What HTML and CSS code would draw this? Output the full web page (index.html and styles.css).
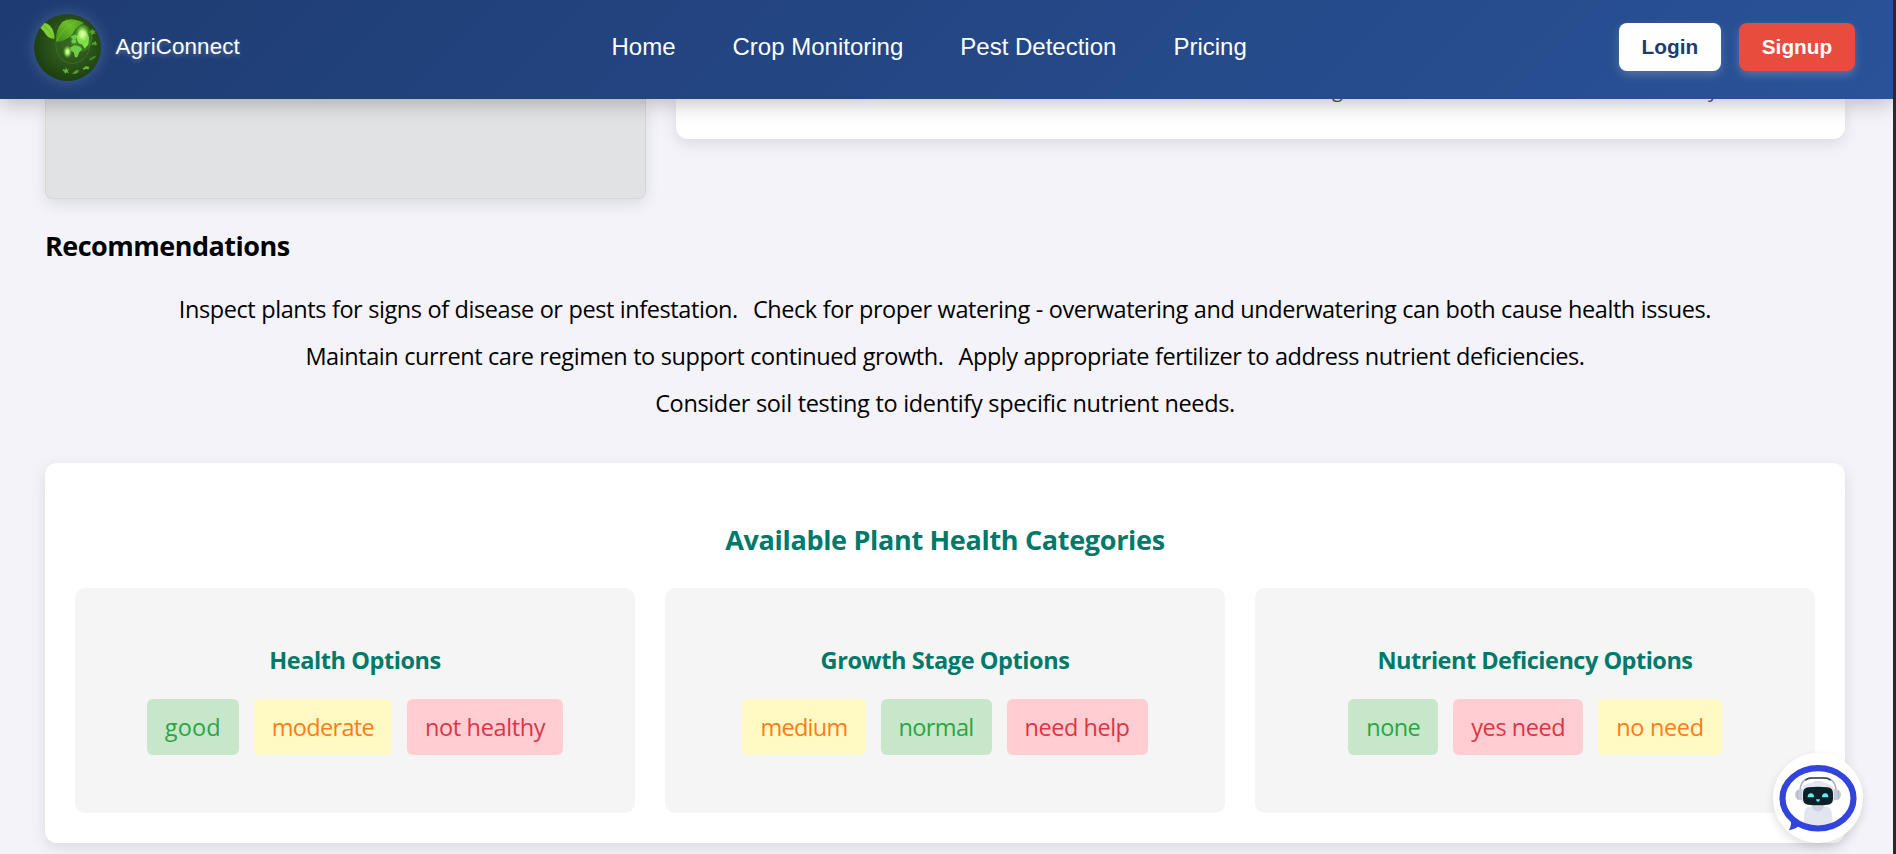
FILE: index.html
```html
<!DOCTYPE html>
<html lang="en">
<head>
<meta charset="utf-8">
<title>AgriConnect</title>
<link rel="stylesheet" href="styles.css">
</head>
<body>
<div class="page">
  <header class="navbar">
    <div class="brand">
      <svg class="brand-logo" viewBox="17 16 202 202">
        <defs>
          <radialGradient id="globe" cx="0.55" cy="0.45" r="0.6">
            <stop offset="0" stop-color="#3a6b20"/>
            <stop offset="0.55" stop-color="#2a5219"/>
            <stop offset="1" stop-color="#193c0d"/>
          </radialGradient>
          <linearGradient id="leaf" x1="0" y1="1" x2="1" y2="0">
            <stop offset="0" stop-color="#3c8a17"/>
            <stop offset="0.6" stop-color="#6cbd28"/>
            <stop offset="1" stop-color="#4c9a1c"/>
          </linearGradient>
          <radialGradient id="glow">
            <stop offset="0" stop-color="#f4ffd0"/>
            <stop offset="0.4" stop-color="#b4f970" stop-opacity="0.9"/>
            <stop offset="1" stop-color="#56c02a" stop-opacity="0"/>
          </radialGradient>
        </defs>
        <circle cx="118" cy="117" r="101" fill="url(#globe)"/>
        <path d="M38 46Q54 38 66 52Q78 66 79 90Q62 92 53 78Q46 66 36 58Z" fill="#7dcf35"/>
        <path d="M42 47Q62 62 76 88" fill="none" stroke="#5fae27" stroke-width="2"/>
        <path d="M83 101Q82 62 102 40Q126 22 168 43Q150 50 141 62Q128 96 83 101Z" fill="url(#leaf)"/>
        <path d="M86 97Q100 60 146 38" fill="none" stroke="#7cc93a" stroke-width="2"/>
        <path d="M83 100Q80 140 108 158Q136 174 164 154Q188 134 184 96Q178 62 152 54" fill="none" stroke="#4a7a38" stroke-width="2"/>
        <ellipse cx="160" cy="88" rx="34" ry="42" fill="#57b52f" opacity="0.3"/>
        <path d="M127 84L142 78L150 84L142 92L146 102L136 106L129 100L134 92Z" fill="#6fcb48"/>
        <path d="M127 116L140 110L156 114L162 122L153 132L148 146L141 147L137 132L127 125Z" fill="#6fcb48"/>
        <path d="M147 82L156 66L174 68L183 88L181 108L170 120L162 108L152 105L146 94Z" fill="#7fe24c"/>
        <ellipse cx="163" cy="77" rx="23" ry="31" fill="url(#glow)"/>
        <ellipse cx="118" cy="130" rx="14" ry="20" fill="url(#glow)"/>
        <g fill="#63b53b">
          <path d="M188 66l7-5 2 6 6-1-4 6 5 3-9 1-4 4-1-6-6-2z" opacity="0.8"/>
          <path d="M192 104l8-4 4-3v7l5 2-7 5-4-3-6 2z" opacity="0.8"/>
          <path d="M184 150l10-6 11-3-4 8-9 5-8 2z" opacity="0.5"/>
          <path d="M164 180l9-7 11 3-3 7-8-2-6 4z"/>
          <path d="M132 196l10-10 11-2-3 8-6 4-8 1z" opacity="0.75"/>
          <path d="M104 182l7 3 2-8 4 7 6-2-5 6 5 5-8-1-5 4-1-6-5-3z"/>
        </g>
      </svg>
      <span class="brand-name">AgriConnect</span>
    </div>
    <nav class="nav-links">
      <a>Home</a><a>Crop Monitoring</a><a>Pest Detection</a><a>Pricing</a>
    </nav>
    <div class="auth">
      <a class="btn btn-login">Login</a>
      <a class="btn btn-signup">Signup</a>
    </div>
  </header>

  <main class="content">
    <section class="results">
      <div class="preview"></div>
      <div class="details">
        <p class="details-text"><span>g</span><span>y</span></p>
      </div>
    </section>

    <h2 class="section-title">Recommendations</h2>
    <ul class="recs">
      <li>Inspect plants for signs of disease or pest infestation.</li>
      <li>Check for proper watering - overwatering and underwatering can both cause health issues.</li>
      <li>Maintain current care regimen to support continued growth.</li>
      <li>Apply appropriate fertilizer to address nutrient deficiencies.</li>
      <li class="rec-last">Consider soil testing to identify specific nutrient needs.</li>
    </ul>

    <section class="panel">
      <h2 class="panel-title">Available Plant Health Categories</h2>
      <div class="groups">
        <div class="group">
          <h3>Health Options</h3>
          <div class="chips">
            <span class="chip green good">good</span>
            <span class="chip yellow moderate">moderate</span>
            <span class="chip red unhealthy">not healthy</span>
          </div>
        </div>
        <div class="group">
          <h3>Growth Stage Options</h3>
          <div class="chips">
            <span class="chip yellow medium">medium</span>
            <span class="chip green normal">normal</span>
            <span class="chip red help">need help</span>
          </div>
        </div>
        <div class="group">
          <h3 class="tight">Nutrient Deficiency Options</h3>
          <div class="chips">
            <span class="chip green none">none</span>
            <span class="chip red yes">yes need</span>
            <span class="chip yellow no">no need</span>
          </div>
        </div>
      </div>
    </section>
  </main>
</div>

<div class="chatbot">
  <svg viewBox="99 68 270 270">
    <path d="M192 284V250Q194 228 216 228H252Q274 228 276 250V284Q234 296 192 284Z" fill="#e3e6ef"/>
    <path d="M215 224H253Q250 243 234 243Q218 243 215 224Z" fill="#cdd1de"/>
    <path d="M216 160Q219 152 234 152Q249 152 252 160Z" fill="#d5d9e5"/>
    <path d="M184 184Q188 156 234 156Q280 156 284 184V206Q280 226 234 226Q188 226 184 206Z" fill="#e3e6ef"/>
    <path d="M180 182Q182 144 214 143H254Q286 144 289 182" fill="none" stroke="#aab0bd" stroke-width="4.5"/>
    <path d="M196 150Q204 143 216 143H252Q264 143 272 150" fill="none" stroke="#34444d" stroke-width="4"/>
    <path d="M186 176V210Q165 209 165 193Q165 177 186 176Z" fill="#c6cad8"/>
    <path d="M282 176V210Q303 209 303 193Q303 177 282 176Z" fill="#c6cad8"/>
    <path d="M173 180V207M295 180V207" stroke="#aeb3c4" stroke-width="3"/>
    <path d="M189 190Q189 172 206 171Q234 168 262 171Q279 172 279 190V205Q279 221 262 223Q234 226 206 223Q189 221 189 205Z" fill="#0c2027"/>
    <path d="M203 201V197Q205 188 213 189Q222 189 222 201ZM246 201V197Q248 188 256 189Q265 189 265 201ZM228 207H240Q239 215 234 215Q229 215 228 207Z" fill="#5ff0ef"/>
    <path d="M152 268Q156 285 146 300Q166 297 180 284Z" fill="#3344dc"/>
    <ellipse cx="234" cy="204" rx="106.5" ry="90.5" fill="none" stroke="#3344dc" stroke-width="18.5"/>
  </svg>
</div>
</body>
</html>
```
FILE: styles.css
```css
* { box-sizing: border-box; margin: 0; padding: 0; }

body {
  height: 854px;
  overflow: hidden;
  background: #2a2a2a;
  font-family: "Open Sans", "Noto Sans", sans-serif;
  color: #000;
}

.page {
  width: 1893px;
  height: 854px;
  overflow: hidden;
  background: #f4f3f9;
}

/* Navigation bar */
.navbar {
  position: relative;
  z-index: 2;
  display: grid;
  grid-template-columns: 611.5px 1fr auto;
  height: 99px;
  padding: 0 38px 5px 0;
  align-items: center;
  background: linear-gradient(135deg, #1e3c72, #2a5298);
  box-shadow: 0 4px 20px rgba(0, 0, 0, 0.25);
  font-family: "Liberation Sans", Arial, sans-serif;
  color: #fff;
}

.brand { display: flex; align-items: center; gap: 14.5px; padding-left: 34px; }

.brand-logo {
  width: 67px;
  height: 67px;
  border-radius: 50%;
  box-shadow: 0 0 15px rgba(255, 255, 255, 0.2);
}

.brand-name {
  font-size: 22.4px;
  letter-spacing: 0.1px;
  text-shadow: 0 2px 4px rgba(255, 255, 255, 0.25);
}

.nav-links { display: flex; gap: 57px; font-size: 24px; }

.auth { display: flex; gap: 18px; }

.btn {
  height: 48px;
  padding: 0 22.8px;
  border-radius: 8px;
  font-size: 20.8px;
  font-weight: 700;
  line-height: 48px;
  box-shadow: 0 4px 10px rgba(255, 255, 255, 0.2);
}

.btn-login { background: #fff; color: #1e3c72; }
.btn-signup { background: #e84c3d; color: #fff; }

/* Page content */
.content { width: 1845px; padding-left: 45px; }

.results {
  display: grid;
  grid-template-columns: 601px 1fr;
  gap: 30px;
  height: 100px;
  align-items: start;
}

.preview {
  height: 100px;
  border: 1px solid #d7d7db;
  border-top: 0;
  border-radius: 0 0 8px 8px;
  background: #e1e2e4;
  box-shadow: 0 5px 15px rgba(0, 0, 0, 0.1);
}

.details {
  height: 40px;
  border-radius: 0 0 12px 12px;
  background: #fff;
  box-shadow: 0 5px 15px rgba(0, 0, 0, 0.1);
}

.details-text {
  display: flex;
  justify-content: flex-end;
  gap: 365px;
  margin-top: -24px;
  padding-right: 127px;
  font-size: 20px;
  line-height: 30px;
  color: #555;
}

.section-title {
  margin-top: 28px;
  font-size: 27px;
  line-height: 37px;
  letter-spacing: -0.52px;
}

.recs {
  display: flex;
  flex-wrap: wrap;
  justify-content: center;
  column-gap: 15px;
  margin-top: 22px;
  list-style: none;
  font-size: 23.5px;
  line-height: 47px;
  letter-spacing: -0.42px;
  word-spacing: 0.2px;
}

.rec-last { letter-spacing: -0.35px; }

/* Categories */
.panel {
  height: 380px;
  margin-top: 36px;
  padding: 58px 30px 30px;
  border-radius: 12px;
  background: #fff;
  box-shadow: 0 5px 15px rgba(0, 0, 0, 0.1);
  text-align: center;
}

.panel-title {
  font-size: 27px;
  line-height: 37px;
  letter-spacing: -0.32px;
  color: #00796b;
}

.groups {
  display: grid;
  grid-template-columns: repeat(3, 1fr);
  gap: 30px;
  margin-top: 30px;
}

.group {
  height: 225px;
  padding-top: 56px;
  border-radius: 10px;
  background: #f5f5f5;
}

.group h3 {
  font-size: 23.5px;
  line-height: 32px;
  letter-spacing: -0.42px;
  color: #00796b;
}

.group .tight { letter-spacing: -0.5px; }

.chips { display: flex; justify-content: center; gap: 15px; margin-top: 23px; }

.chip {
  height: 56px;
  padding: 0 18px;
  border-radius: 6px;
  font-size: 23.5px;
  line-height: 56px;
}

.green { background: #c8e6c9; color: #28a745; }
.yellow { background: #fff9c4; color: #fd7e14; }
.red { background: #ffcdd2; color: #dc3545; }

.good { letter-spacing: 0.1px; }
.moderate { letter-spacing: -0.66px; }
.unhealthy { letter-spacing: -0.37px; }
.medium { letter-spacing: -0.73px; }
.normal { letter-spacing: -0.64px; }
.help { letter-spacing: -0.48px; }
.none { letter-spacing: -0.55px; }
.yes { letter-spacing: -0.43px; }
.no { letter-spacing: -0.35px; }

/* Chat launcher floating over the page */
.chatbot {
  position: fixed;
  left: 1773px;
  top: 753px;
  z-index: 3;
  width: 90px;
  height: 90px;
  border-radius: 50%;
  background: #fff;
  box-shadow: 0 4px 10px rgba(0, 0, 0, 0.12);
}

.chatbot svg { display: block; width: 90px; height: 90px; }
```
